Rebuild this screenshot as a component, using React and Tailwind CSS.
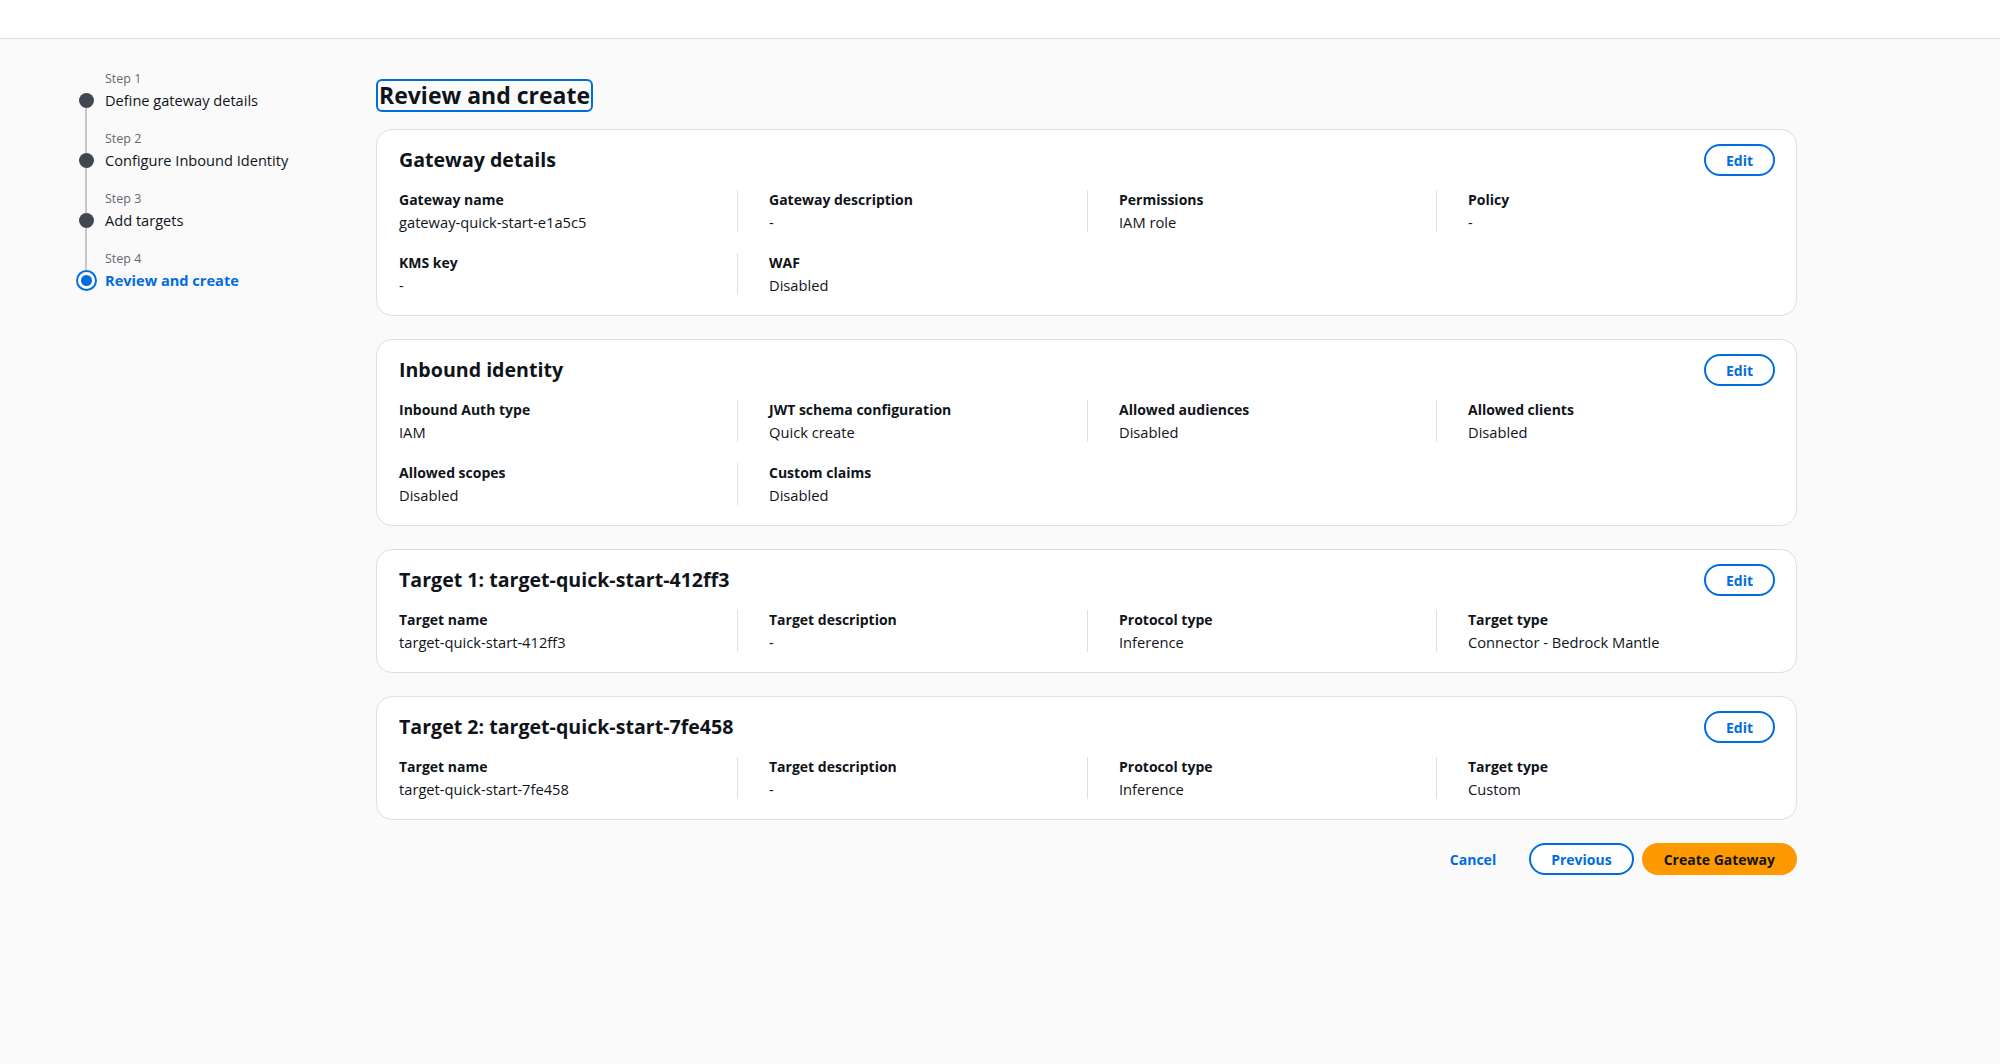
import React from 'react';

const steps = [
  { n: 1, label: 'Define gateway details' },
  { n: 2, label: 'Configure Inbound Identity' },
  { n: 3, label: 'Add targets' },
  { n: 4, label: 'Review and create', active: true },
];

const sections = [
  {
    title: 'Gateway details',
    rows: [
      [
        ['Gateway name', 'gateway-quick-start-e1a5c5'],
        ['Gateway description', '-'],
        ['Permissions', 'IAM role'],
        ['Policy', '-'],
      ],
      [
        ['KMS key', '-'],
        ['WAF', 'Disabled'],
      ],
    ],
  },
  {
    title: 'Inbound identity',
    rows: [
      [
        ['Inbound Auth type', 'IAM'],
        ['JWT schema configuration', 'Quick create'],
        ['Allowed audiences', 'Disabled'],
        ['Allowed clients', 'Disabled'],
      ],
      [
        ['Allowed scopes', 'Disabled'],
        ['Custom claims', 'Disabled'],
      ],
    ],
  },
  {
    title: 'Target 1: target-quick-start-412ff3',
    rows: [
      [
        ['Target name', 'target-quick-start-412ff3'],
        ['Target description', '-'],
        ['Protocol type', 'Inference'],
        ['Target type', 'Connector - Bedrock Mantle'],
      ],
    ],
  },
  {
    title: 'Target 2: target-quick-start-7fe458',
    rows: [
      [
        ['Target name', 'target-quick-start-7fe458'],
        ['Target description', '-'],
        ['Protocol type', 'Inference'],
        ['Target type', 'Custom'],
      ],
    ],
  },
];

function StepItem({ step, first, last }) {
  return (
    <div className="flex h-[60px] gap-[9px]">
      <div className="flex w-5 flex-col items-center">
        {step.active ? (
          <>
            <div className={`w-[2px] h-[39px] ${first ? '' : 'bg-[#c6c6cd]'}`} />
            <div className="flex h-[21px] w-[21px] items-center justify-center rounded-full border-2 border-[#006ce0] bg-white">
              <div className="h-[11px] w-[11px] rounded-full bg-[#006ce0]" />
            </div>
          </>
        ) : (
          <>
            <div className={`w-[2px] h-[42px] ${first ? '' : 'bg-[#c6c6cd]'}`} />
            <div className="h-[15px] w-[15px] rounded-full bg-[#424650]" />
          </>
        )}
        <div className={`w-[2px] flex-1 ${last ? '' : 'bg-[#c6c6cd]'}`} />
      </div>
      <div className="pt-5">
        <div className="h-4 text-[12.5px] leading-4 text-[#656871]">Step {step.n}</div>
        <div
          className={`mt-[2px] text-[14.6px] leading-[22px] ${
            step.active ? 'font-bold text-[#006ce0]' : 'text-[#0f141a]'
          }`}
        >
          {step.label}
        </div>
      </div>
    </div>
  );
}

function Section({ section }) {
  return (
    <div className="rounded-2xl border border-[#dedee3] bg-white pl-[22px] pr-[21px] pt-[14px] pb-5">
      <div className="flex h-8 items-center justify-between">
        <h2 className="text-[19.6px] font-bold leading-6 text-[#0f141a]">{section.title}</h2>
        <button className="h-8 rounded-full border-2 border-[#006ce0] px-5 text-[14px] font-bold text-[#006ce0]">
          Edit
        </button>
      </div>
      <div className="mt-[14px] flex flex-col gap-[21px]">
        {section.rows.map((row, ri) => (
          <div key={ri} className="grid grid-cols-[338px_350px_349px_1fr]">
            {row.map(([label, value], ci) => (
              <div key={ci} className={ci === 0 ? '' : 'border-l border-[#dedee3] pl-[31px]'}>
                <div className="text-[14px] font-bold leading-5 text-[#0f141a]">{label}</div>
                <div className="mt-[2px] text-[14.7px] leading-5 text-[#0f141a]">{value}</div>
              </div>
            ))}
          </div>
        ))}
      </div>
    </div>
  );
}

export default function App() {
  return (
    <div className="min-h-screen bg-[#fafafa] font-['Open_Sans',sans-serif] text-[#0f141a]">
      <div className="h-[39px] border-b border-[#d9d9de] bg-white" />
      <div className="flex items-start">
        <nav className="w-[376px] shrink-0 pl-[76px] pt-3">
          {steps.map((s, i) => (
            <StepItem key={s.n} step={s} first={i === 0} last={i === steps.length - 1} />
          ))}
        </nav>
        <main className="w-[1421px] pt-10">
          <h1 className="inline-block rounded-md border-2 border-[#006ce0] px-[1px] text-[23px] font-bold leading-[29px] text-[#0f141a]">
            Review and create
          </h1>
          <div className="mt-[17px] flex flex-col gap-[23px]">
            {sections.map((s) => (
              <Section key={s.title} section={s} />
            ))}
          </div>
          <div className="mt-[23px] flex items-center justify-end gap-2">
            <button className="mr-[5px] h-8 px-5 text-[14px] font-bold text-[#006ce0]">Cancel</button>
            <button className="h-8 rounded-full border-2 border-[#006ce0] bg-white px-5 text-[14px] font-bold text-[#006ce0]">
              Previous
            </button>
            <button className="h-8 rounded-full border-2 border-[#ff9900] bg-[#ff9900] px-5 text-[14px] font-bold text-[#0f141a]">
              Create Gateway
            </button>
          </div>
        </main>
      </div>
    </div>
  );
}
